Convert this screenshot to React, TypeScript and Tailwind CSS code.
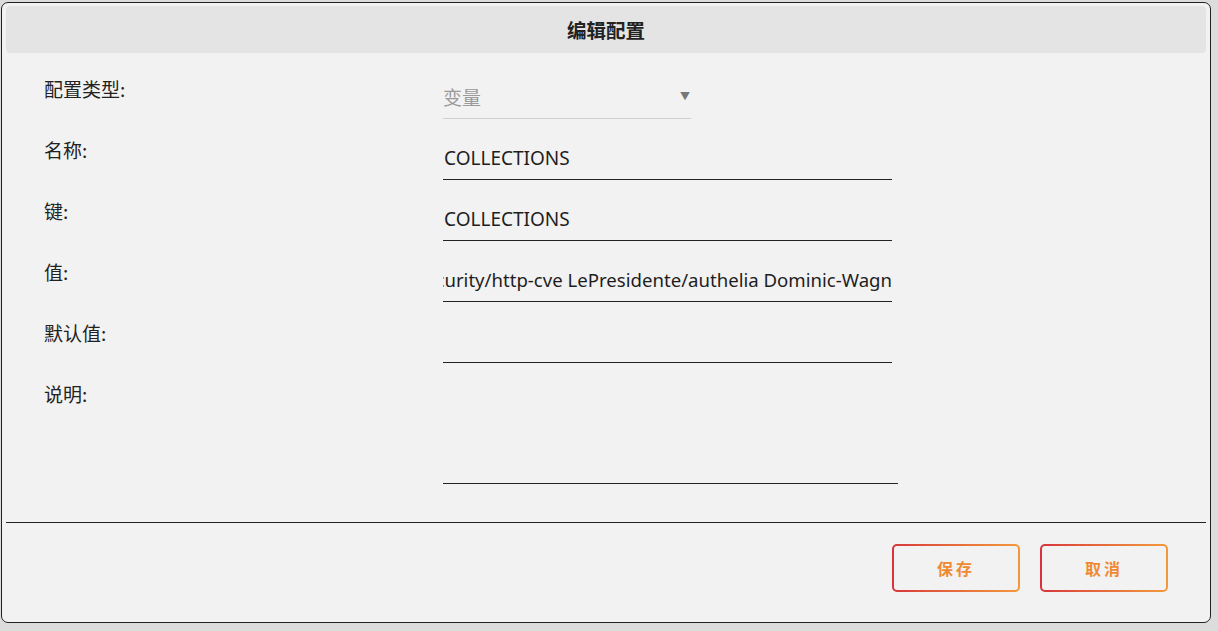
import React from "react";

const cjk = '"Noto Sans CJK SC", "Noto Sans", sans-serif';
const latin = '"Noto Sans", "Noto Sans CJK SC", sans-serif';

function Label({ children }: { children: React.ReactNode }) {
  return (
    <div className="w-[437px] shrink-0 pl-[38px] text-[19px] leading-[20px] text-[#222]">
      {children}
    </div>
  );
}

function TextRow({ label, value }: { label: string; value: string }) {
  return (
    <div className="flex h-[61px]">
      <Label>{label}</Label>
      <div
        className="mt-[6px] h-[34px] w-[449px] overflow-hidden border-b border-[#222] text-[19px] leading-[24px] text-[#1e1e1e]"
        style={{ fontFamily: latin }}
      >
        <div className="whitespace-nowrap pl-[1px]">{value}</div>
      </div>
    </div>
  );
}

function GradButton({ children }: { children: React.ReactNode }) {
  return (
    <div className="h-[48px] w-[128px] rounded-[5px] bg-gradient-to-r from-[#d8333a] to-[#f2993c] p-[2px]">
      <div className="flex h-full w-full items-center justify-center rounded-[3px] bg-[#f2f2f2] text-[16px] font-bold tracking-[3px] text-[#f08a32]">
        {children}
      </div>
    </div>
  );
}

export default function App() {
  return (
    <div className="h-[631px] w-[1218px] bg-[#dcdcdc] pt-[2px]" style={{ fontFamily: cjk }}>
      <div className="ml-[1px] h-[621px] w-[1210px] rounded-[7px] border border-[#222] bg-[#f2f2f2] px-[4px] pt-[3px]">
        <div className="flex h-[47px] items-center justify-center rounded-[4px] bg-[#e4e4e4] text-[19.5px] font-bold text-[#222]">
          编辑配置
        </div>
        <div className="pt-[26px]">
          <div className="flex h-[61px]">
            <Label>配置类型:</Label>
            <div className="mt-[6px] flex h-[34px] w-[248px] items-start justify-between border-b border-[#cfcfcf] text-[19px] leading-[24px] text-[#9a9a9a]">
              <span>变量</span>
              <span className="pr-[1px] pt-[1px] text-[10px] leading-[20px] text-[#777]">▼</span>
            </div>
          </div>
          <TextRow label="名称:" value="COLLECTIONS" />
          <TextRow label="键:" value="COLLECTIONS" />
          <div className="flex h-[61px]">
            <Label>值:</Label>
            <div
              className="mt-[6px] flex h-[34px] w-[449px] justify-end overflow-hidden border-b border-[#222] text-[18.6px] leading-[24px] text-[#1e1e1e]"
              style={{ fontFamily: latin }}
            >
              <div className="whitespace-nowrap">
                projectdiscovery/nuclei-templates 0xsecurity/http-cve LePresidente/authelia Dominic-Wagn
              </div>
            </div>
          </div>
          <TextRow label="默认值:" value="" />
          <div className="flex">
            <Label>说明:</Label>
            <div className="mt-[6px] h-[94px] w-[455px] border-b border-[#222]" />
          </div>
        </div>
        <div className="mt-[38px] h-px bg-[#222]" />
        <div className="flex justify-end gap-[20px] pr-[38px] pt-[21px]">
          <GradButton>保存</GradButton>
          <GradButton>取消</GradButton>
        </div>
      </div>
    </div>
  );
}
